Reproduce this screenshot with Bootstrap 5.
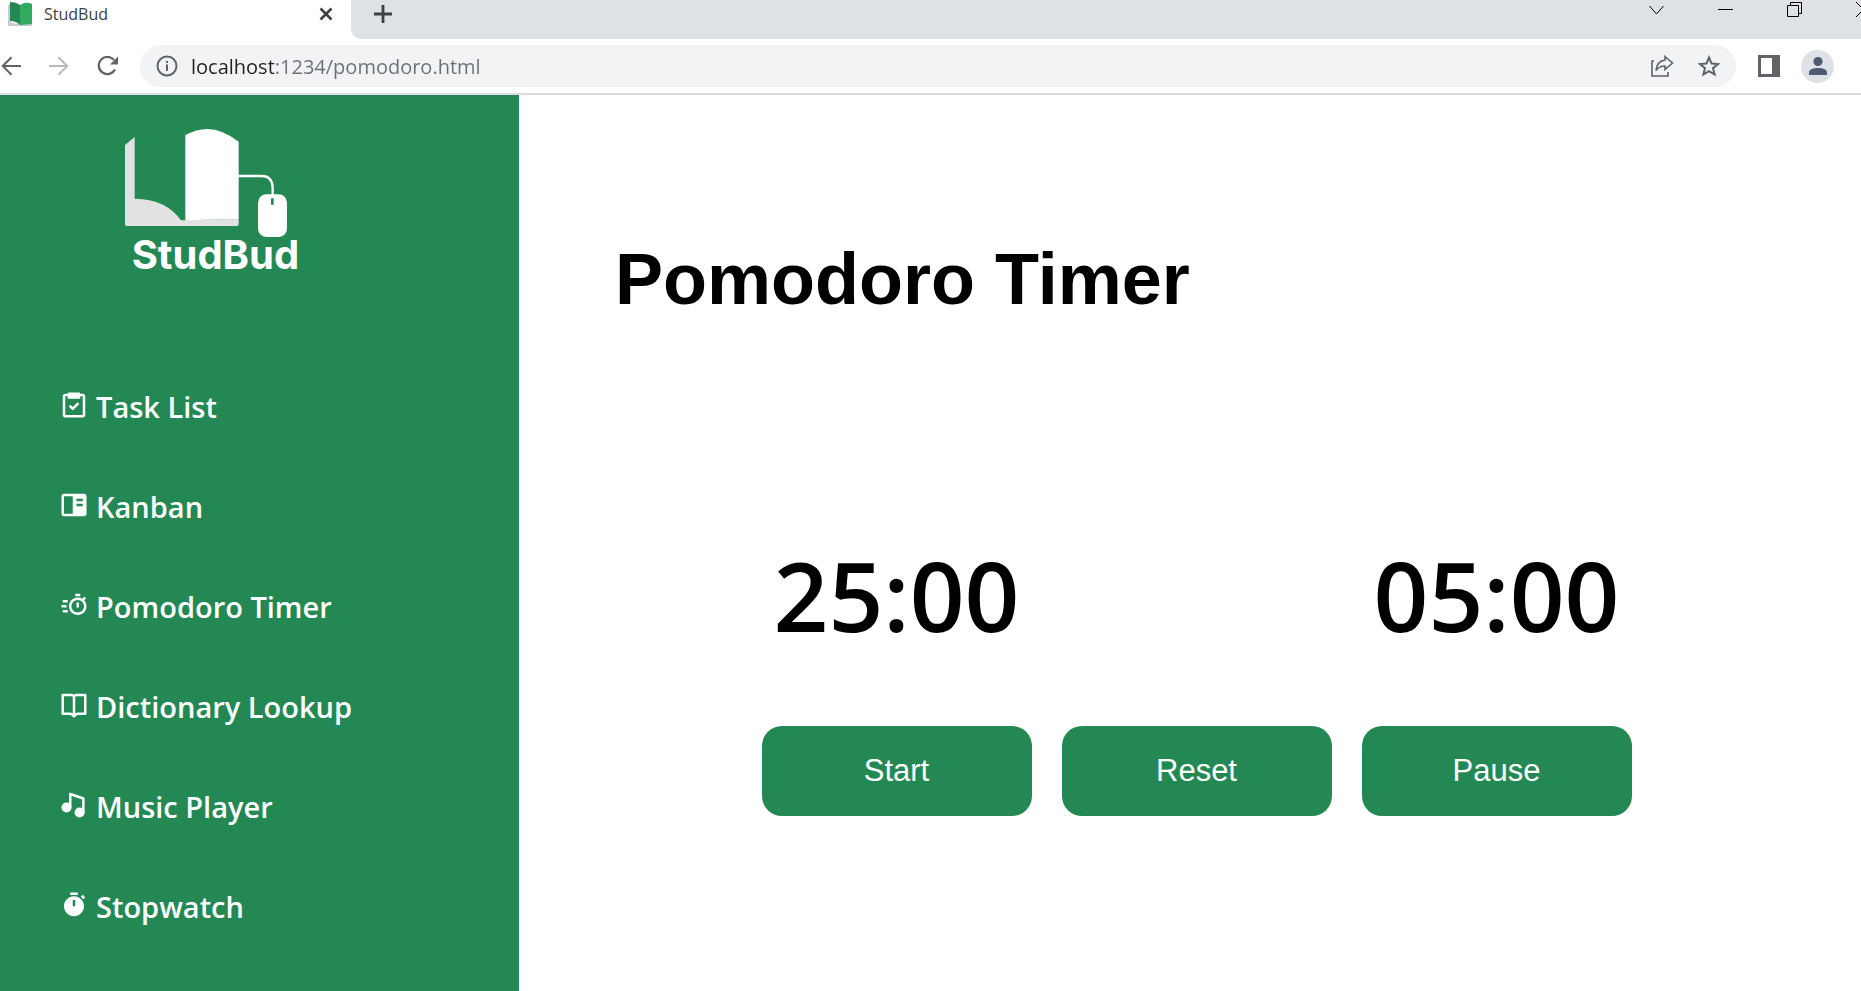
<!DOCTYPE html>
<html lang="en">
<head>
<meta charset="utf-8">
<meta name="viewport" content="width=device-width, initial-scale=1">
<title>StudBud</title>
<link href="https://cdn.jsdelivr.net/npm/bootstrap@5.3.0/dist/css/bootstrap.min.css" rel="stylesheet">
<style>
  :root { --brand: #238853; --strip: #dee1e6; --ink: #5f6368; }
  body { font-family: "Open Sans", sans-serif; color: #000; background: #fff; }
  svg { display: block; flex: none; }
  .icon-btn { padding: 0; border: 0; background: none; color: var(--ink); display: flex; align-items: center; justify-content: center; flex: none; }
  .tab-strip { height: 39px; background: #fff; }
  .active-tab { width: 351px; height: 28px; padding: 0 18px 0 8px; font-size: 16px; color: #3c4043; }
  .strip-rest { background: var(--strip); border-bottom-left-radius: 10px; color: #000; }
  .new-tab { width: 64px; height: 28px; color: #3c4043; }
  .window-controls { margin-right: -37px; }
  .window-controls .icon-btn { width: 69px; height: 19px; color: #000; }
  .toolbar { height: 56px; padding: 7px 27px 7px 0; border-bottom: 2px solid #dadce0; }
  .nav-tools { width: 140px; padding-left: 1px; gap: 28px; }
  .address-bar { height: 42px; border-radius: 21px; background: #f1f3f4; padding: 0 16px 0 16px; }
  .address-input { border: 0; padding: 0; margin: 0 13px; height: 42px; font-size: 20px; line-height: 28px; outline: 0;
    background: linear-gradient(90deg, #202124 83px, #6b6f74 83px); -webkit-background-clip: text; background-clip: text; color: transparent; }
  .browser-tools { margin-left: 22px; gap: 21px; }
  .avatar { width: 33px; height: 33px; border-radius: 50%; background: var(--strip); color: #4f5b73; }
  .sidebar { width: 519px; background: var(--brand); padding-top: 15px; }
  .brand-logo { margin-left: 100px; width: 220px; height: 180px; }
  .side-nav { padding: 97px 20px 20px 59px; gap: 60px; }
  .side-link { color: #fff; font-size: 29px; line-height: 40px; font-weight: 600; text-decoration: none; gap: 7px; }
  .side-link:hover { color: #fff; text-decoration: underline; }
  .side-link svg { margin-bottom: 4px; fill: currentColor; }
  .content { padding: 144px 83px 60px 96px; }
  .page-title { font: bold 72px/80px "Liberation Sans", Arial, sans-serif; margin-bottom: 216px; }
  .timer-grid { display: grid; grid-template-columns: repeat(3, minmax(0, 1fr)); gap: 71px 30px; max-width: 870px; }
  .clock { font-size: 96px; line-height: 120px; font-weight: 600; text-align: center; }
  .clock-break { grid-column: 3; }
  .timer-btn { height: 90px; border: 0; border-radius: 20px; background: var(--brand); color: #fff; font: 31px/40px "Liberation Sans", Arial, sans-serif; }
  .timer-btn:hover { background: #1d7447; color: #fff; }
</style>
</head>
<body class="d-flex flex-column min-vh-100">

<header>
  <div class="tab-strip d-flex overflow-hidden">
    <div class="active-tab d-flex align-items-center flex-shrink-0">
      <svg width="24" height="24" viewBox="0 0 24 24" aria-hidden="true"><path d="M0 3 3 1v20l9 1h12v2H0z" fill="#c9cacb"/><path d="M2 0q6 0 10 3v20q-4-4-10-4z" fill="#238853"/><path d="M12 3q6-4 12-1v20l-12 1z" fill="#2faa5f"/></svg>
      <span class="ms-2 ps-1 me-auto">StudBud</span>
      <button class="icon-btn" aria-label="Close tab"><svg width="14" height="14" viewBox="0 0 14 14" stroke="#3c4043" stroke-width="2.500"><path d="M1.500 1.500l11 11M12.500 1.500l-11 11"/></svg></button>
    </div>
    <div class="strip-rest d-flex flex-grow-1 align-items-start">
      <button class="icon-btn new-tab" aria-label="New tab"><svg width="18" height="18" viewBox="0 0 18 18" stroke="currentColor" stroke-width="2.800"><path d="M9 0v18M0 9h18"/></svg></button>
      <div class="window-controls d-flex ms-auto">
        <button class="icon-btn" aria-label="Search tabs"><svg width="15" height="10" viewBox="0 0 15 10" fill="none" stroke="currentColor"><path d="M.5 1 7.500 9l7-8"/></svg></button>
        <button class="icon-btn" aria-label="Minimize"><svg width="15" height="15" viewBox="0 0 15 15"><path d="M0 7h15v1H0z"/></svg></button>
        <button class="icon-btn" aria-label="Restore"><svg width="15" height="15" viewBox="0 0 15 15" fill="none" stroke="currentColor"><path d="M.5 3.500h11v11H.5zM3.500 3V.5h11v11H12"/></svg></button>
        <button class="icon-btn" aria-label="Close window"><svg width="15" height="15" viewBox="0 0 15 15" stroke="currentColor"><path d="M0 0l15 15M15 0 0 15"/></svg></button>
      </div>
    </div>
  </div>

  <div class="toolbar d-flex align-items-center">
    <div class="nav-tools d-flex align-items-center flex-shrink-0">
      <button class="icon-btn" aria-label="Back"><svg width="20" height="20" viewBox="0 0 20 20" fill="none" stroke="currentColor" stroke-width="2"><path d="M20 10H2M10.500 1.200 1.700 10l8.800 8.800"/></svg></button>
      <button class="icon-btn" aria-label="Forward" disabled><svg width="20" height="20" viewBox="0 0 20 20" fill="none" stroke="#bababc" stroke-width="2"><path d="M0 10h18M9.500 1.200l8.800 8.800-8.800 8.800"/></svg></button>
      <button class="icon-btn" aria-label="Reload"><svg width="22" height="20" viewBox="0 0 22 20"><path d="M18 13.500A8.600 8.600 0 1 1 17 4" fill="none" stroke="currentColor" stroke-width="2.200"/><path d="M21 .5V8.500H13z" fill="currentColor"/></svg></button>
    </div>
    <div class="address-bar d-flex align-items-center flex-grow-1">
      <button class="icon-btn" aria-label="Site information"><svg width="22" height="22" viewBox="0 0 22 22"><circle cx="11" cy="11" r="9.500" fill="none" stroke="currentColor" stroke-width="2"/><path d="M10 9.500h2V16h-2zM10 6h2v2h-2z" fill="currentColor"/></svg></button>
      <input class="address-input flex-grow-1" type="text" aria-label="Address" value="localhost:1234/pomodoro.html">
      <button class="icon-btn" aria-label="Share"><svg width="24" height="22" viewBox="0 0 24 22" fill="none" stroke="currentColor" stroke-width="1.600"><path d="M4 6H2v15h16v-4"/><path d="M15 1.500l7.500 6.500-7.500 6.500V11q-6 0-9 4.500Q7 6 15 5z"/></svg></button>
      <button class="icon-btn ms-4" aria-label="Bookmark"><svg width="22" height="22" viewBox="0 0 22 22" fill="none" stroke="currentColor" stroke-width="2"><path d="M11 2.500l2.500 6 6.500.5-5 4.200 1.600 6.300L11 16.100l-5.600 3.400L7 13.200 2 9l6.500-.5z"/></svg></button>
    </div>
    <div class="browser-tools d-flex align-items-center">
      <button class="icon-btn" aria-label="Side panel"><svg width="22" height="22" viewBox="0 0 22 22"><path d="M0 0h22v22H0zM3 3v16h11V3z" fill="currentColor" fill-rule="evenodd"/></svg></button>
      <button class="icon-btn avatar" aria-label="Profile"><svg width="20" height="20" viewBox="0 0 20 20" fill="currentColor"><circle cx="10" cy="5.500" r="4.600"/><path d="M1 19v-2.500Q1 12 10 12t9 4.500V19z"/></svg></button>
    </div>
  </div>
</header>

<div class="d-flex flex-grow-1">
  <aside class="sidebar flex-shrink-0">
    <svg class="brand-logo" viewBox="0 0 660 540" role="img" aria-label="StudBud">
      <path d="M75 105 104 81V266Q200 268 243 331L416 327V343Q416 348 411 348H80Q75 348 75 343Z" fill="#e2e2e2"/>
      <path d="M256 75Q290 57 322 57 366 57 416 95V327L256 331Z" fill="#fff"/>
      <path d="M414 198H485Q518 198 518 236V256" fill="none" stroke="#fff" stroke-width="7"/>
      <rect x="474" y="253" width="87" height="128" rx="25" fill="#fff"/>
      <rect x="513" y="264" width="8" height="21" rx="4" fill="#238853"/>
      <text x="95" y="476" fill="#fff" font-family="Inter, sans-serif" font-weight="700" font-size="120">StudBud</text>
    </svg>
    <nav class="side-nav d-flex flex-column" aria-label="Main">
      <a class="side-link d-flex align-items-center" href="#"><svg width="30" height="30" viewBox="0 0 24 24"><path d="M5 22h14c1.100 0 2-.9 2-2V5c0-1.100-.9-2-2-2h-2a1 1 0 0 0-1-1H8a1 1 0 0 0-1 1H5c-1.100 0-2 .9-2 2v15c0 1.100.9 2 2 2zM5 5h2v2h10V5h2v15H5z"/><path d="M11 13.586 9.207 11.793l-1.414 1.414L11 16.414l5.207-5.207-1.414-1.414z"/></svg>Task List</a>
      <a class="side-link d-flex align-items-center" href="#"><svg width="30" height="30" viewBox="0 0 24 24"><path fill-rule="evenodd" d="M20 3H4c-1.103 0-2 .897-2 2v14c0 1.103.897 2 2 2h16c1.103 0 2-.897 2-2V5c0-1.103-.897-2-2-2zM4 19V5h7v14H4zM19 13h-5v-2h5v2zm0-4h-5V7h5v2z"/></svg>Kanban</a>
      <a class="side-link d-flex align-items-center" href="#"><svg width="30" height="30" viewBox="0 0 24 24"><path d="M20.145 8.270l1.563-1.563-1.414-1.414L18.586 7c-1.050-.63-2.274-1-3.586-1-3.859 0-7 3.140-7 7s3.141 7 7 7 7-3.140 7-7a6.966 6.966 0 0 0-1.855-4.730zM15 18c-2.757 0-5-2.243-5-5s2.243-5 5-5 5 2.243 5 5-2.243 5-5 5z"/><path d="M14 10h2v4h-2zM13 3h4v2h-4zM3 8h4v2H3zM3 16h4v2H3zM2 12h4v2H2z"/></svg>Pomodoro Timer</a>
      <a class="side-link d-flex align-items-center" href="#"><svg width="30" height="30" viewBox="0 0 24 24"><path d="M21 3h-7a2.980 2.980 0 0 0-2 .78A2.980 2.980 0 0 0 10 3H3a1 1 0 0 0-1 1v15a1 1 0 0 0 1 1h5.758c.526 0 1.042.214 1.414.586l1.121 1.121a1 1 0 0 0 1.414 0l1.121-1.121A2.015 2.015 0 0 1 15.242 20H21a1 1 0 0 0 1-1V4a1 1 0 0 0-1-1zM8.758 18H4V5h6c.552 0 1 .449 1 1v12.689A4.032 4.032 0 0 0 8.758 18zM20 18h-4.758c-.799 0-1.584.246-2.242.689V6c0-.551.448-1 1-1h6v13z"/></svg>Dictionary Lookup</a>
      <a class="side-link d-flex align-items-center" href="#"><svg width="30" height="30" viewBox="0 0 24 24"><circle cx="6" cy="14" r="4"/><circle cx="16.500" cy="18" r="4"/><path d="M9 14V3.200l10.500 3.600V18" fill="none" stroke="currentColor" stroke-width="2" stroke-linejoin="round"/></svg>Music Player</a>
      <a class="side-link d-flex align-items-center" href="#"><svg width="30" height="30" viewBox="0 0 24 24"><path d="M12 5c-4.411 0-8 3.589-8 8s3.589 8 8 8 8-3.589 8-8-3.589-8-8-8zm1 8h-2V8h2v5zM9 2h6v2H9zM19 3.800l2 2-1.600 1.600-2-2z"/></svg>Stopwatch</a>
    </nav>
  </aside>

  <main class="content flex-grow-1">
    <h1 class="page-title">Pomodoro Timer</h1>
    <div class="timer-grid mx-auto">
      <div class="clock" role="timer" aria-label="Work time">25:00</div>
      <div class="clock clock-break" role="timer" aria-label="Break time">05:00</div>
      <button class="btn timer-btn" type="button">Start</button>
      <button class="btn timer-btn" type="button">Reset</button>
      <button class="btn timer-btn" type="button">Pause</button>
    </div>
  </main>
</div>

<script src="https://cdn.jsdelivr.net/npm/bootstrap@5.3.0/dist/js/bootstrap.bundle.min.js"></script>
</body>
</html>
